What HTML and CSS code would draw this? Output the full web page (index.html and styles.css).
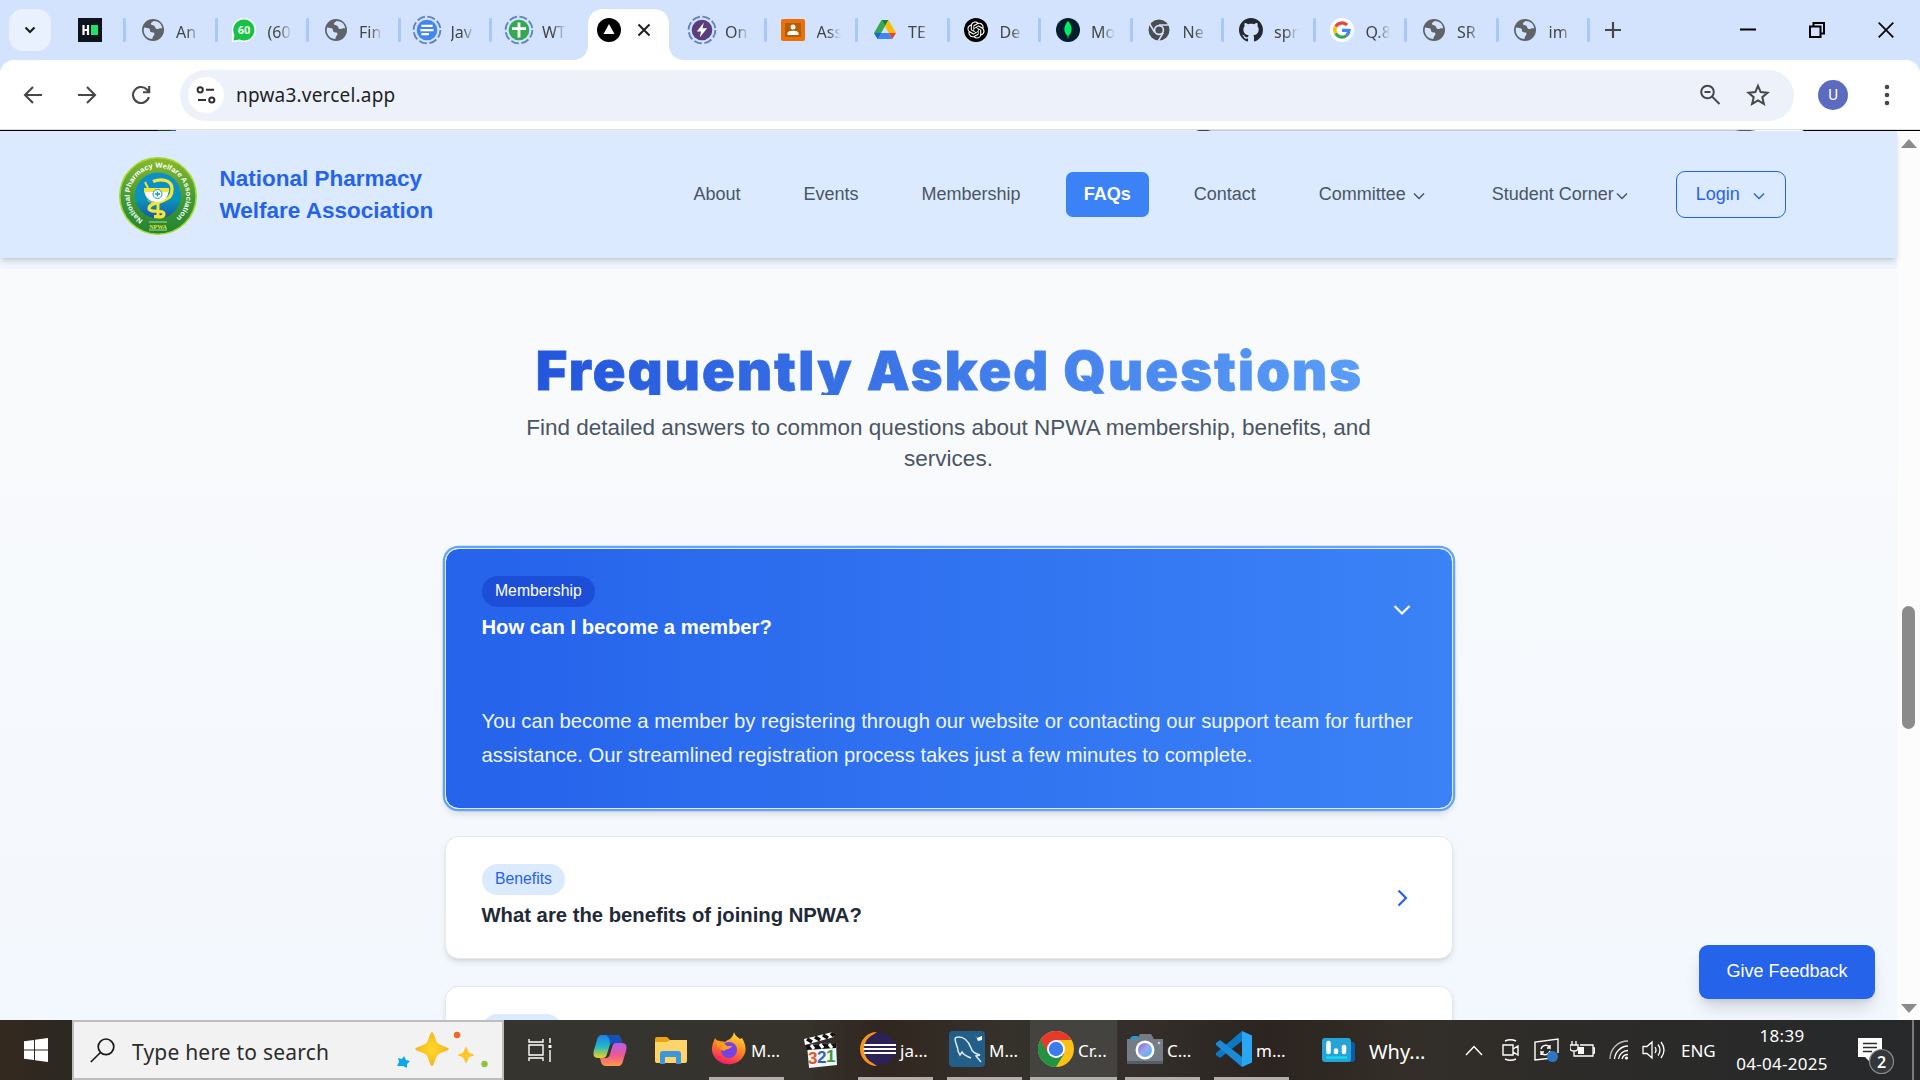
FILE: index.html
```html
<!DOCTYPE html>
<html lang="en">
<head>
<meta charset="utf-8">
<title>NPWA</title>
<link rel="stylesheet" href="styles.css">
</head>
<body>
<svg class="defs" width="0" height="0">
  <symbol id="globe" viewBox="0 0 24 24"><circle cx="12" cy="12" r="11" fill="#5f6368"/><path d="M3 9.5c2 .6 4.500 .2 5.500 1.200 1 1-.2 2.500 1.300 3.300s3.500-.2 3.600 1.800-1.700 1.800-2 5.200C6.500 21 3 17 2.700 12.500zM12.500 3c-1 1.200-2.800 1.500-2.600 3s2.600.8 3.600 2 .6 2.600 2.200 3 3-1 5.500-.6C20.800 6 17.500 3 12.500 3z" fill="#d3e3fd"/></symbol>
  <symbol id="ring" viewBox="0 0 32 32"><circle cx="16" cy="16" r="14.300" fill="none" stroke="#6184bd" stroke-width="2" stroke-dasharray="8.500 2.730"/></symbol>
  <symbol id="down" viewBox="0 0 12 8"><path d="M1 1.500l5 5 5-5" fill="none" stroke="currentColor" stroke-width="1.500"/></symbol>
</svg>

<div class="tabstrip">
  <div class="tab-search"><svg width="14" height="10" viewBox="0 0 14 10"><path d="M2.500 2.500L7 7l4.500-4.500" fill="none" stroke="#1f1f1f" stroke-width="2.200"/></svg></div>
  <div class="tab tab-pinned"><svg class="fav" viewBox="0 0 24 24"><path fill="#0e141e" d="M0 0h24v24H0z"/><path d="M5.500 7v10M10 7v10M5.500 12H10" stroke="#fff" stroke-width="2.200"/><path fill="#1ee06b" d="M13 7h7v10h-7z"/></svg></div>
  <div class="tab"><svg class="fav"><use href="#globe"/></svg><span>An</span></div>
  <div class="tab"><svg class="fav" viewBox="0 0 24 24"><path d="M12 0a12 12 0 1 1-4 23.300L0 24V12A12 12 0 0 1 12 0z" fill="#fff"/><path d="M12 1.500a10.500 10.500 0 1 1-4.500 20L1.500 22.500 2.500 17A10.500 10.500 0 0 1 12 1.500z" fill="#17c244"/><text x="12" y="16" font-size="11" font-weight="700" fill="#fff" text-anchor="middle" font-family="Roboto,sans-serif">60</text></svg><span>(60</span></div>
  <div class="tab"><svg class="fav"><use href="#globe"/></svg><span>Fin</span></div>
  <div class="tab"><svg class="fav big" viewBox="0 0 32 32"><use href="#ring"/><circle cx="16" cy="16" r="11" fill="#4285f4"/><path d="M10 11.500h12M9 16h14M10 20.500h8" stroke="#fff" stroke-width="2.400"/></svg><span>Jav</span></div>
  <div class="tab nosep"><svg class="fav big" viewBox="0 0 32 32"><use href="#ring"/><circle cx="16" cy="16" r="11" fill="#34a853"/><path d="M16 8v16M8.500 14.500h15" stroke="#fff" stroke-width="3"/></svg><span>WT</span></div>
  <div class="tab nosep active"><svg class="fav" viewBox="0 0 24 24"><circle cx="12" cy="12" r="12"/><path fill="#fff" d="M12 6l5.500 10h-11z"/></svg><svg class="close" width="14" height="14" viewBox="0 0 14 14"><path d="M1.500 1.500l11 11m0-11l-11 11" stroke="#1f1f1f" stroke-width="2"/></svg></div>
  <div class="tab"><svg class="fav big" viewBox="0 0 32 32"><use href="#ring"/><circle cx="16" cy="16" r="11" fill="#5a3d7c"/><path d="M18 8l-7.500 9.500h4.500L13.500 24l8-10h-5z" fill="#fff"/></svg><span>On</span></div>
  <div class="tab"><svg class="fav" viewBox="0 0 24 24"><rect y="1" width="24" height="22" rx="2" fill="#e8710a"/><path fill="#b85c00" d="M4 5h16v14H4z"/><circle cx="12" cy="9" r="2.500" fill="#fff"/><path d="M6.500 17v-2c0-3 11-3 11 0v2z" fill="#fff"/></svg><span>Ass</span></div>
  <div class="tab"><svg class="fav" viewBox="0 0 24 24"><path d="M8.500 2h7L12 8.300z" fill="#188038"/><path d="M8.500 2L12 8.300 4.700 21 1 15z" fill="#34a853"/><path d="M15.500 2L23 15h-7.200L12 8.300z" fill="#fbbc04"/><path d="M4.700 21L8.200 15h7.600l3.500 6z" fill="#4285f4"/><path d="M1 15h7.200l-3.500 6z" fill="#1967d2"/><path d="M23 15h-7.200l3.500 6z" fill="#ea4335"/></svg><span>TE</span></div>
  <div class="tab"><svg class="fav" viewBox="0 0 24 24"><circle cx="12" cy="12" r="12"/><path transform="translate(3.400 3.400) scale(.717)" fill="#fff" d="M22.2819 9.8211a5.9847 5.9847 0 0 0-.5157-4.9108 6.0462 6.0462 0 0 0-6.5098-2.9A6.0651 6.0651 0 0 0 4.9807 4.1818a5.9847 5.9847 0 0 0-3.9977 2.9 6.0462 6.0462 0 0 0 .7427 7.0966 5.98 5.98 0 0 0 .511 4.9107 6.051 6.051 0 0 0 6.5146 2.9001A5.9847 5.9847 0 0 0 13.2599 24a6.0557 6.0557 0 0 0 5.7718-4.2058 5.9894 5.9894 0 0 0 3.9977-2.9001 6.0557 6.0557 0 0 0-.7475-7.0729zm-9.022 12.6081a4.4755 4.4755 0 0 1-2.8764-1.0408l.1419-.0804 4.7783-2.7582a.7948.7948 0 0 0 .3927-.6813v-6.7369l2.02 1.1686a.071.071 0 0 1 .038.052v5.5826a4.504 4.504 0 0 1-4.4945 4.4944zm-9.6607-4.1254a4.4708 4.4708 0 0 1-.5346-3.0137l.142.0852 4.783 2.7582a.7712.7712 0 0 0 .7806 0l5.8428-3.3685v2.3324a.0804.0804 0 0 1-.0332.0615L9.74 19.9502a4.4992 4.4992 0 0 1-6.1408-1.6464zM2.3408 7.8956a4.485 4.485 0 0 1 2.3655-1.9728V11.6a.7664.7664 0 0 0 .3879.6765l5.8144 3.3543-2.0201 1.1685a.0757.0757 0 0 1-.071 0l-4.8303-2.7865A4.504 4.504 0 0 1 2.3408 7.872zm16.5963 3.8558L13.1038 8.364 15.1192 7.2a.0757.0757 0 0 1 .071 0l4.8303 2.7913a4.4944 4.4944 0 0 1-.6765 8.1042v-5.6772a.79.79 0 0 0-.407-.667zm2.0107-3.0231l-.142-.0852-4.7735-2.7818a.7759.7759 0 0 0-.7854 0L9.409 9.2297V6.8974a.0662.0662 0 0 1 .0284-.0615l4.8303-2.7866a4.4992 4.4992 0 0 1 6.6802 4.66zM8.3065 12.863l-2.02-1.1638a.0804.0804 0 0 1-.038-.0567V6.0742a4.4992 4.4992 0 0 1 7.3757-3.4537l-.142.0805L8.704 5.459a.7948.7948 0 0 0-.3927.6813zm1.0976-2.3654l2.602-1.4998 2.6069 1.4998v2.9994l-2.5974 1.4997-2.6067-1.4997Z"/></svg><span>De</span></div>
  <div class="tab"><svg class="fav" viewBox="0 0 24 24"><circle cx="12" cy="12" r="12" fill="#001e2b"/><path d="M12 3c5 5.500 4.500 11.500.4 15v2.500h-.8V18C7.500 14.500 7 8.500 12 3z" fill="#00ed64"/></svg><span>Mo</span></div>
  <div class="tab"><svg class="fav" viewBox="0 0 24 24"><circle cx="12" cy="12" r="10.500" fill="#4a4d51"/><circle cx="12" cy="12" r="5.200" fill="#d3e3fd"/><circle cx="12" cy="12" r="3.600" fill="#4a4d51"/><path d="M12 7h10M7.700 14.500L2.700 6M16.300 14.500l-5 8.500" stroke="#d3e3fd" stroke-width="1.500"/></svg><span>Ne</span></div>
  <div class="tab"><svg class="fav" viewBox="0 0 16 16"><path fill="#24292f" d="M8 0C3.580 0 0 3.580 0 8c0 3.540 2.290 6.530 5.470 7.590.4.070.55-.17.55-.38 0-.19-.01-.82-.01-1.490-2.010.37-2.530-.49-2.690-.94-.09-.23-.48-.94-.82-1.130-.28-.15-.68-.52-.01-.53.63-.01 1.080.58 1.230.82.72 1.210 1.870.87 2.330.66.070-.52.28-.87.510-1.070-1.780-.2-3.640-.89-3.640-3.950 0-.87.310-1.590.820-2.150-.08-.2-.36-1.020.08-2.120 0 0 .67-.21 2.200.82.640-.18 1.320-.27 2-.27s1.360.09 2 .27c1.530-1.040 2.200-.82 2.200-.82.440 1.100.160 1.920.080 2.120.510.560.820 1.270.820 2.150 0 3.070-1.870 3.750-3.650 3.950.290.250.540.730.540 1.480 0 1.070-.01 1.930-.01 2.200 0 .210.150.460.550.380A8 8 0 0 0 16 8c0-4.420-3.580-8-8-8z"/></svg><span>spr</span></div>
  <div class="tab"><svg class="fav" viewBox="0 0 24 24"><circle cx="12" cy="12" r="12" fill="#fff"/><g fill="none" stroke-width="3.300"><path d="M17 7A7.200 7.200 0 0 0 5.800 8.500" stroke="#ea4335"/><path d="M5.800 8.500a7.200 7.200 0 0 0 0 7" stroke="#fbbc04"/><path d="M5.800 15.500a7.200 7.200 0 0 0 10.800 2" stroke="#34a853"/><path d="M16.600 17.500A7.200 7.200 0 0 0 19 12.300h-7" stroke="#4285f4"/></g></svg><span>Q.8</span></div>
  <div class="tab"><svg class="fav"><use href="#globe"/></svg><span>SR</span></div>
  <div class="tab"><svg class="fav"><use href="#globe"/></svg><span>im</span></div>
  <svg class="plus" width="16" height="16" viewBox="0 0 16 16"><path d="M8 0v16M0 8h16" stroke="#474747" stroke-width="2.200"/></svg>
  <div class="winctl">
    <svg width="16" height="16" viewBox="0 0 16 16"><path d="M0 7.500h16" stroke="#000" stroke-width="2"/></svg>
    <svg width="16" height="16" viewBox="0 0 16 16"><path d="M1 4.500h10.500V15H1zM4.500 4.500V1H15v10.500h-3.500" fill="none" stroke="#000" stroke-width="2"/></svg>
    <svg width="16" height="16" viewBox="0 0 16 16"><path d="M.7.7l14.600 14.600m0-14.600L.7 15.300" stroke="#000" stroke-width="1.700"/></svg>
  </div>
</div>

<div class="toolbar">
  <svg class="nav-ic" viewBox="0 0 20 20"><path d="M19 10H2.500M10 2L2 10l8 8" fill="none" stroke="#474747" stroke-width="2.100"/></svg>
  <svg class="nav-ic" viewBox="0 0 20 20"><path d="M1 10h16.500M10 2l8 8-8 8" fill="none" stroke="#474747" stroke-width="2.100"/></svg>
  <svg class="nav-ic" viewBox="0 0 20 20"><path d="M17.800 12a8 8 0 1 1-1.900-7.500L18 6.700M18.200 1v6.300H12" fill="none" stroke="#474747" stroke-width="2.100"/></svg>
  <div class="omnibox">
    <div class="chip"><svg width="20" height="18" viewBox="0 0 20 18"><g fill="none" stroke="#303030" stroke-width="2"><circle cx="4.200" cy="3.800" r="2.600"/><path d="M10 3.800h8M2 14h8"/><circle cx="15.800" cy="14" r="2.600"/></g></svg></div>
    <span class="url">npwa3.vercel.app</span>
    <svg class="zoom" width="22" height="22" viewBox="0 0 22 22"><g fill="none" stroke="#474747" stroke-width="2"><circle cx="8.500" cy="8" r="6.300"/><path d="M13 12.500l7.500 7.500M5.500 8h6"/></g></svg>
    <svg width="24" height="24" viewBox="0 0 24 24"><path d="M12 2.800l2.700 6.300 6.800.6-5.200 4.500 1.600 6.700L12 17.300l-5.900 3.600 1.600-6.700-5.200-4.500 6.800-.6z" fill="none" stroke="#474747" stroke-width="2"/></svg>
  </div>
  <div class="avatar">U</div>
  <svg class="dots" width="6" height="22" viewBox="0 0 6 22"><g fill="#474747"><circle cx="3" cy="3" r="2.300"/><circle cx="3" cy="11" r="2.300"/><circle cx="3" cy="19" r="2.300"/></g></svg>
</div>
<div class="edge"></div>

<div class="viewport">
  <div class="page">
    <header class="site-header">
      <svg class="logo" viewBox="0 0 78 78">
        <defs>
          <linearGradient id="lg" x2="0" y2="1"><stop stop-color="#8cb82b"/><stop offset=".55" stop-color="#3d9a36"/><stop offset="1" stop-color="#23832f"/></linearGradient>
          <linearGradient id="lb" x2="0" y2="1"><stop stop-color="#0c8fd0"/><stop offset=".6" stop-color="#0a93b8"/><stop offset="1" stop-color="#1a57a8"/></linearGradient>
          <path id="arc" d="M24 63A28.300 28.300 0 1 1 54 63"/>
        </defs>
        <circle cx="39" cy="39" r="38.200" fill="url(#lg)" stroke="#a4d82c" stroke-width="1.600"/>
        <circle cx="39" cy="38.500" r="23" fill="url(#lb)"/>
        <text font-family="Liberation Sans,sans-serif" font-size="7.200" font-weight="700" fill="#fff"><textPath href="#arc" textLength="142" lengthAdjust="spacingAndGlyphs">National Pharmacy Welfare Association</textPath></text>
        <g fill="none" stroke="#f4e53a" stroke-width="3.200"><path d="M34 24.500c8-3.500 19-1.500 19 7.500s-5 10-10 12-13 3-13 7.500 15 1 15 5.500-8 2.500-10 2.500"/><path d="M39 44v16" stroke-width="3"/></g>
        <path d="M25 31h25c0 10-6 14-12.500 14S25 41 25 31z" fill="#fff"/><path d="M25 31h25v4H25z" fill="#f4e53a"/><path d="M27 41c3 6 18 6 21 0l-2 3q-8 6-17 0z" fill="#f4e53a"/><path d="M29 31l-3-6" stroke="#f4e53a" stroke-width="2"/>
        <circle cx="38.500" cy="37" r="4.500" fill="#fff" stroke="#1694b5"/><path d="M38.500 34.500v5M36 37h5" stroke="#1694b5" stroke-width="1.300"/>
        <path d="M30 65h18M30 73h18" stroke="#b9d9a0" stroke-width="1"/><text x="39" y="71.500" font-family="Liberation Serif,serif" font-size="6" font-weight="700" fill="#e8e43a" text-anchor="middle">NPWA</text>
      </svg>
      <div class="brand">National Pharmacy<br>Welfare Association</div>
      <nav class="menu">
        <a>About</a><a>Events</a><a>Membership</a><a class="current">FAQs</a><a>Contact</a>
        <a class="drop">Committee<svg class="chev"><use href="#down"/></svg></a>
        <a class="drop tight">Student Corner<svg class="chev"><use href="#down"/></svg></a>
      </nav>
      <div class="login">Login<svg class="chev"><use href="#down"/></svg></div>
    </header>
    <div class="strip"></div>
    <main class="faq">
      <h1>Frequently Asked Questions</h1>
      <p class="lead">Find detailed answers to common questions about NPWA membership, benefits, and services.</p>
      <section class="card open">
        <div class="card-head">
          <div><span class="badge">Membership</span><h3>How can I become a member?</h3></div>
          <svg class="toggle" viewBox="0 0 22 22"><path d="M3.500 7l7.500 7.500L18.500 7" fill="none" stroke="currentColor" stroke-width="2.200"/></svg>
        </div>
        <p class="answer">You can become a member by registering through our website or contacting our support team for further assistance. Our streamlined registration process takes just a few minutes to complete.</p>
      </section>
      <section class="card">
        <div class="card-head">
          <div><span class="badge">Benefits</span><h3>What are the benefits of joining NPWA?</h3></div>
          <svg class="toggle" viewBox="0 0 22 22"><path d="M7.500 3.500L15 11l-7.500 7.500" fill="none" stroke="currentColor" stroke-width="2.200"/></svg>
        </div>
      </section>
      <section class="card">
        <div class="card-head"><div><span class="badge empty"></span></div></div>
      </section>
    </main>
    <button class="feedback">Give Feedback</button>
  </div>
  <div class="scrollbar">
    <svg width="16" height="9" viewBox="0 0 16 9"><path d="M8 0l8 9H0z" fill="#8b8b8b"/></svg>
    <div class="thumb"></div>
    <svg width="16" height="9" viewBox="0 0 16 9"><path d="M8 9l8-9H0z" fill="#8b8b8b"/></svg>
  </div>
</div>

<div class="taskbar">
  <div class="start"><svg width="24" height="24" viewBox="0 0 24 24"><path fill="#fff" d="M0 3.300l10-1.400v9.500H0zM11 1.700L24 0v11.400H11zM0 12.500h10V22L0 20.700zM11 12.500h13V24l-13-1.800z"/></svg></div>
  <div class="search">
    <svg width="25" height="25" viewBox="0 0 25 25"><g fill="none" stroke="#1a1a1a" stroke-width="1.700"><circle cx="16" cy="8.800" r="7.800"/><path d="M10.500 14.500L.8 24"/></g></svg>
    <span>Type here to search</span>
    <svg class="spark" width="94" height="48" viewBox="0 0 94 48"><defs><radialGradient id="gs"><stop stop-color="#ffd92e"/><stop offset="1" stop-color="#f5b61b"/></radialGradient></defs><path d="M37 6c2 0 3.500 9 5.500 11S54 21.500 54 23s-9.500 3.500-11.500 6S39 40 37 40s-3.500-8.500-5.500-11S20 24.500 20 23s9.500-4 11.500-6S35 6 37 6z" fill="url(#gs)"/><path d="M71 21c1 0 2 4.500 3 5.500s5 1.500 5 2.500-4 1.500-5 2.500-2 5.500-3 5.500-2-4.500-3-5.500-5-1.500-5-2.500 4-1.500 5-2.500 2-5.500 3-5.500z" fill="#fcc62c"/><path d="M9 30l2 4 4 1-3 3 0 4-4-2-6 0 2-4-1-4 4 1z" fill="#0aa9ea"/><circle cx="62" cy="9" r="3.200" fill="#f26522"/><circle cx="89.500" cy="38" r="3.200" fill="#8cc63f"/></svg>
  </div>
  <svg class="taskview" width="24" height="24" viewBox="0 0 24 24"><g fill="none" stroke="#fff" stroke-width="1.400"><path d="M1 1v3h14V1M1 7h14v10H1zM1 23v-3h14v3M22 0v5M22 12v12"/></g><path fill="#fff" d="M20.500 7h3v3h-3z"/></svg>
  <svg class="copilot" width="34" height="32" viewBox="0 0 34 32"><defs><linearGradient id="c1" x2="0" y2="1"><stop stop-color="#1b7ff0"/><stop offset=".5" stop-color="#22b8c8"/><stop offset="1" stop-color="#f0d21a"/></linearGradient><linearGradient id="c2" x2="0" y2="1"><stop stop-color="#b45cf0"/><stop offset=".55" stop-color="#ee5a8e"/><stop offset="1" stop-color="#ff9a4a"/></linearGradient></defs><path d="M9 1h14c4 0 5 3 6 8h-9c-2 0-3 1-3.500 3L14 20c-1 3-2 4-5 4H5c-5 0-5-4-4-8l3-10C5 2.500 6 1 9 1z" fill="url(#c1)"/><path d="M23 1c4 0 5 3 6 8h-9c-2 0-2.500 1-3 2 0-5-1-8-4-10z" fill="#1450b8"/><path d="M25 32H13c-4 0-5-3-6-8h5c3 0 4-1 5-4l2.500-8c.5-2 1.500-3 3.500-3h6c5 0 5 4 4 8l-3 10c-1 3.500-2 5-5 5z" fill="url(#c2)"/></svg>
  <svg class="explorer" width="32" height="27" viewBox="0 0 32 27"><path d="M0 2q0-2 2-2h10l3 3v5H0z" fill="#e8a317"/><path d="M0 5h12l3-2h17v21q0 2-2 2H2q-2 0-2-2z" fill="#fdd468"/><path d="M5 26V17q0-3 3-3h15q3 0 3 3v10h-5v-7H10v7H5z" fill="#3a97e0"/></svg>
  <div class="app firefox"><svg width="36" height="36" viewBox="0 0 36 36"><defs><linearGradient id="ff" x1=".7" x2=".3" y2="1"><stop stop-color="#ffe23e"/><stop offset=".45" stop-color="#ff8a1f"/><stop offset="1" stop-color="#f5156c"/></linearGradient></defs><path d="M23 1c1 4 4 5 6 7l2-1c3 5 4 9 3.500 13A17 16 0 0 1 1 20C.5 14 3 10 4 7l3 4c2-1 5-1 7 0 2-2 8-3 9-10z" fill="url(#ff)"/><circle cx="18" cy="19" r="8" fill="#7542e5"/><path d="M5 9c5 1 8 3 11 6h5c-1 3-6 3-8 5-2-1-8-3-8-11z" fill="#ff9a1a"/></svg><span>M...</span></div>
  <svg class="mpc" width="34" height="36" viewBox="0 0 34 36"><path d="M3 13l29-2 1 22-28 3z" fill="#f6f6f6"/><path d="M0 7L29 0l1 5L1 13z" fill="#fff"/><path d="M2 13l30-2v5L3 18z" fill="#111"/><path d="M3 7l5 3M11 5l5 3M19 3l5 3M27 1l3 3" stroke="#111" stroke-width="3.500"/><path d="M7 13l3 4M16 12l3 4M25 12l3 4" stroke="#fff" stroke-width="3"/><g font-family="Liberation Sans,sans-serif" font-weight="700" font-size="17"><text x="4" y="32" fill="#d9582b">3</text><text x="13" y="31" fill="#2c64b8">2</text><text x="22" y="30" fill="#379c3b">1</text></g></svg>
  <div class="app eclipse"><svg width="36" height="36" viewBox="0 0 36 36"><path d="M17 1A17 17 0 0 0 17 35 20 20 0 0 1 17 1z" fill="#f7941e"/><circle cx="20" cy="18" r="16" fill="#2c2255"/><path d="M4 14h32M3.500 18h33M4 22h32" stroke="#fff" stroke-width="2"/></svg><span>ja...</span></div>
  <div class="app mysql"><svg width="36" height="36" viewBox="0 0 36 36"><rect width="36" height="36" rx="4" fill="#225e88"/><path d="M6 7c8-4 14 4 16 10 1 4 5 6 9 7l-4 1 5 6M6 7c0 6 3 8 3 13l2 4 2-3c2 4 5 4 9 6" fill="none" stroke="#dbe9f2" stroke-width="1.500"/><path d="M26 3l2 4 5-2v4l-4 1z" fill="#fff"/></svg><span>M...</span></div>
  <div class="app chrome"><svg width="36" height="36" viewBox="0 0 36 36"><circle cx="18" cy="18" r="18" fill="#fbc116"/><path d="M18 18L2.400 9A18 18 0 0 0 18 36l8-13z" fill="#229342"/><path d="M18 9h15.600A18 18 0 0 0 2.400 9L10.200 22.500 18 18z" fill="#e33b2e"/><circle cx="18" cy="18" r="9" fill="#fff"/><circle cx="18" cy="18" r="7.200" fill="#3a7cec"/></svg><span>Cr...</span></div>
  <div class="app camera"><svg width="36" height="30" viewBox="0 0 36 30"><defs><linearGradient id="cm" x2="1" y2="1"><stop stop-color="#7e6ad8"/><stop offset=".5" stop-color="#9ca6ee"/><stop offset="1" stop-color="#35c0ee"/></linearGradient></defs><path d="M3 6q0-4 4-4h4v4z" fill="#1c9be0"/><path d="M0 5h10l3-5h11l3 5h9v25H0z" fill="#747c86"/><path d="M0 27h36v3H0z" fill="#555d66"/><circle cx="18" cy="16" r="9.500" fill="#fff"/><circle cx="18" cy="16" r="7" fill="url(#cm)"/><circle cx="32" cy="9" r="1.300" fill="#ccc"/></svg><span>C...</span></div>
  <div class="app vscode"><svg width="36" height="36" viewBox="0 0 36 36"><path d="M26 0l10 4.500v27L26 36z" fill="#2aa7f2"/><path d="M26 0v10L4 27 0 24v-2z" fill="#0b78c4"/><path d="M26 36V26L4 9 0 12v2z" fill="#1a8ad6"/></svg><span>m...</span></div>
  <svg class="news" width="34" height="24" viewBox="0 0 34 24"><path d="M20 4h10q3 0 3 3v14q0 3-3 3H20z" fill="#0b5cad"/><rect width="29" height="24" rx="3" fill="#27a4d6"/><path d="M6.500 5v9M14 12.500v1.500M22 9v5" stroke="#fff" stroke-width="4.500" stroke-linecap="round"/><path d="M4 19.500h21" stroke="#13dcf0" stroke-width="2.400"/></svg>
  <span class="why">Why...</span>
  <div class="tray">
    <svg width="18" height="11" viewBox="0 0 18 11"><path d="M1 10l8-8.500 8 8.500" fill="none" stroke="#fff" stroke-width="1.500"/></svg>
    <svg width="17" height="22" viewBox="0 0 17 22"><path d="M3 2q5.500-2.500 11 0M3 20q5.500 2.500 11 0M1 6h10v10H1zM11 10l5-3v9l-5-3" fill="none" stroke="#fff" stroke-width="1.400"/></svg>
    <svg width="25" height="25" viewBox="0 0 25 25"><path d="M14 20.500L1 22V4l23-3v14" fill="none" stroke="#fff" stroke-width="1.400"/><path d="M7 11a5 5 0 0 1 9-1.500V7M16 10h-3M16 13a5 5 0 0 1-9 1.500V17M7 14h3" fill="none" stroke="#fff" stroke-width="1.400"/><circle cx="18.500" cy="18.500" r="5.500" fill="#2f75c2"/></svg>
    <svg width="25" height="19" viewBox="0 0 25 19"><path d="M8 15h15V4H10M23 7h1.500v5H23M2 0v4M6 0v4M0 4h8v3q0 3-4 3t-4-3zM4 10v5h4" fill="none" stroke="#fff" stroke-width="1.300"/><path d="M8 6h6v7H8z" fill="#fff"/></svg>
    <svg width="20" height="20" viewBox="0 0 20 20"><g fill="none" stroke="#fff" stroke-width="1.300"><path d="M1 19A18 18 0 0 1 19 1" opacity=".7"/><path d="M5.500 19A14 14 0 0 1 19 6M9.500 19A9.500 9.500 0 0 1 19 10.500M13 19A6 6 0 0 1 19 14.500"/></g><circle cx="17.500" cy="18" r="1.600" fill="#fff"/></svg>
    <svg width="23" height="20" viewBox="0 0 23 20"><path d="M1 6.500h4L10 2v16l-5-4.500H1zM13 7q2 3 0 6M16 4.500q4 5.500 0 11M19 2q6 8 0 16" fill="none" stroke="#fff" stroke-width="1.300"/></svg>
    <span class="lang">ENG</span>
    <div class="clock"><span>18:39</span><span>04-04-2025</span></div>
    <svg width="38" height="38" viewBox="0 0 38 38"><path d="M0 0h24v19H12v5l-5-5H0z" fill="#fff"/><path d="M5 5.500h14M5 9.500h14M5 13.500h9" stroke="#2b2b2b" stroke-width="1.400"/><circle cx="23.500" cy="23.500" r="12" fill="#35373a" stroke="#8d8d8d" stroke-width="1.200"/><text x="23.500" y="29.500" font-family="Noto Sans,sans-serif" font-size="16" font-weight="600" fill="#fff" text-anchor="middle">2</text></svg>
  </div>
  <div class="peek"></div>
</div>
</body>
</html>
```
FILE: styles.css
```css
* { box-sizing: border-box; }
body {
  margin: 0; width: 1920px; height: 1080px; overflow: hidden;
  display: flex; flex-direction: column; background: #d3e3fd;
  font-family: "Liberation Sans", Arial, sans-serif;
}
svg { display: block; flex: none; }
.defs { position: absolute; }

/* browser tabs */
.tabstrip { height: 60px; flex: none; display: flex; align-items: center; padding-left: 9px; font: 16px "Noto Sans", sans-serif; color: #444; }
.tab-search { width: 42px; height: 42px; border-radius: 14px; background: #e9f1fe; display: flex; align-items: center; justify-content: center; }
.tab { position: relative; width: 91.5px; height: 60px; flex: none; display: flex; align-items: center; padding-left: 14.500px; }
.tab::after { content: ""; position: absolute; right: 0; top: 18px; width: 3px; height: 24px; background: #a8c7fa; border-radius: 1px; }
.tab.nosep::after { display: none; }
.tab-pinned { width: 75px; padding-left: 27px; }
.fav { width: 24px; height: 24px; }
.fav.big { width: 30px; height: 30px; margin: 0 -3px; }
.tab span { width: 24px; margin: 3px 0 0 11.500px; overflow: hidden; white-space: nowrap; line-height: 24px; mask-image: linear-gradient(90deg, #000 45%, transparent); }
.tab.active { z-index: 1; left: -1px; }
.tab.active::before {
  content: ""; position: absolute; z-index: -1; left: -9px; top: 9px; width: 109px; height: 51px;
  background:
    radial-gradient(circle at 0 0, transparent 13.500px, #fff 14px) 0 100% / 14px 14px no-repeat,
    radial-gradient(circle at 100% 0, transparent 13.500px, #fff 14px) 100% 100% / 14px 14px no-repeat,
    linear-gradient(#fff, #fff) 14px 100% / 81px 37px no-repeat,
    linear-gradient(#fff, #fff) 28px 0 / 53px 14px no-repeat,
    radial-gradient(circle at 100% 100%, #fff 13.500px, transparent 14px) 14px 0 / 14px 14px no-repeat,
    radial-gradient(circle at 0 100%, #fff 13.500px, transparent 14px) 81px 0 / 14px 14px no-repeat;
}
.close { margin-left: 16px; }
.plus { margin-left: 15px; }
.winctl { margin-left: auto; margin-right: 26.500px; display: flex; gap: 53px; }

/* address bar */
.toolbar { height: 69px; flex: none; display: flex; align-items: center; padding: 1px 0 0 23px; background: #fff; border-radius: 14px 14px 0 0; }
.nav-ic { width: 20px; height: 20px; margin-right: 34px; }
.omnibox { width: 1614px; height: 51px; margin-left: -5px; border-radius: 26px; background: #edf1fa; display: flex; align-items: center; padding: 0 24px 0 8px; }
.chip { width: 36px; height: 36px; border-radius: 50%; background: #fff; display: flex; align-items: center; justify-content: center; }
.url { margin-left: 12px; font: 19px/26px "Noto Sans", sans-serif; color: #1f1f1f; letter-spacing: .2px; }
.zoom { margin-left: auto; margin-right: 25px; }
.avatar { width: 30px; height: 30px; margin-left: 24px; border-radius: 50%; background: #5c6bc0; color: #fff; font: 15px/30px Roboto, sans-serif; text-align: center; }
.dots { margin-left: 36px; }
.edge { height: 2px; flex: none; background: linear-gradient(90deg, #000 157px, #333 159px 170px, #1b64d8 172px 176px, #eceef0 176px 1196px, #444 1199px 1208px, #ccc 1211px 1735px, #555 1740px 1750px, #fff 1756px 1802px, #000 1804px) 0 100% / 100% 1px no-repeat, #dfdfdf; }

.viewport { height: 889px; flex: none; display: flex; overflow: hidden; }
.page { position: relative; width: 1897px; background: linear-gradient(#f9fafb 138px, #f3f8fe); }

/* site header */
.site-header { position: relative; z-index: 1; height: 127px; background: #dbeafe; display: flex; align-items: center; padding-left: 119px; box-shadow: 0 4px 7px -1px rgba(0,0,0,.14), 0 2px 4px -2px rgba(0,0,0,.12); }
.logo { width: 78px; height: 78px; margin-top: 3px; }
.brand { margin-left: 22.500px; font-weight: 700; font-size: 22.500px; line-height: 32px; color: #2563eb; width: 456px; white-space: nowrap; }
.menu { display: flex; gap: 27px; font-size: 18px; color: #4b5563; }
.menu a { display: flex; align-items: center; height: 45px; padding: 0 18px; white-space: nowrap; }
.menu .current { background: #3b82f6; color: #fff; font-weight: 700; border-radius: 6.750px; }
.chev { width: 12px; height: 8px; margin: 2px 4px 0 7px; }
.menu .tight .chev { margin: 2px 0 0 2px; }
.login { display: flex; align-items: center; margin-left: 30.500px; width: 110px; height: 47px; padding-left: 18.500px; border: 1.500px solid #2563eb; border-radius: 9px; color: #2563eb; font-size: 18px; }
.login .chev { margin-left: 13px; }
.strip { height: 11px; background: #eff6ff; }

/* questions */
.faq { display: flex; flex-direction: column; align-items: center; padding-top: 72px; }
h1 {
  margin: 0; width: 1008px; height: 54px; padding-top: 3px; text-align: center; white-space: nowrap;
  font: 900 54px/53px Inter, sans-serif; letter-spacing: 2.200px; text-indent: 2px;
  -webkit-text-stroke: .8px transparent;
  background: linear-gradient(90deg, #1d4ed8, #60a5fa); -webkit-background-clip: text; background-clip: text; color: transparent;
}
.lead { margin: 17px 0 73.500px; width: 864px; text-align: center; font-size: 22.500px; line-height: 31.200px; color: #4b5563; }
.card { width: 1008px; margin-bottom: 27px; background: #fff; border: 1px solid #e5e7eb; border-radius: 13.500px; box-shadow: 0 4px 7px -1px rgba(0,0,0,.1), 0 2px 4px -2px rgba(0,0,0,.1); color: #2563eb; }
.card-head { display: flex; align-items: center; justify-content: space-between; padding: 27px 39px 26.500px 36px; }
.badge { display: block; width: fit-content; height: 31px; padding: 0 13.500px; border-radius: 16px; background: #dbeafe; font-size: 15.750px; line-height: 30px; }
.badge.empty { width: 80px; }
h3 { margin: 5px 0 0; font-size: 20.250px; line-height: 31.500px; color: #1f2937; }
.toggle { width: 22px; height: 22px; }
.open { color: #fff; background: linear-gradient(90deg, #2563eb, #3b82f6) padding-box; box-shadow: 0 0 0 2.250px #60a5fa, 0 5px 7px rgba(0,0,0,.12); }
.open .badge { background: #1d4ed8; }
.open h3 { color: #fff; }
.answer { margin: 0; padding: 35.500px 36px 36px; font-size: 20.250px; line-height: 33.200px; color: #eff6ff; }
.feedback { position: absolute; left: 1699px; top: 814px; width: 176px; height: 54px; border: 0; border-radius: 9px; background: #2563eb; color: #fff; font: 18px "Liberation Sans", sans-serif; padding: 0 0 2px; box-shadow: 0 11px 17px -3px rgba(0,0,0,.15), 0 4px 7px -4px rgba(0,0,0,.15); }
.scrollbar { width: 23px; background: #fcfcfc; display: flex; flex-direction: column; align-items: center; padding: 8px 0 7px; }
.thumb { width: 13px; height: 123px; margin: 458px 0 auto; border-radius: 7px; background: #8b8b8b; }

/* desktop taskbar */
.taskbar { position: relative; height: 60px; flex: none; display: flex; align-items: center; color: #fff; font: 17px "Noto Sans", sans-serif; background: linear-gradient(90deg, #35291f 0, #2b2822 70px, #35342e 520px, #36332d 800px, #30261f 880px, #35312b 1000px, #332e29 1150px, #2b2420 1270px, #332e28 1400px, #2c2b29 1600px, #26282a 1920px); }
.start { width: 72px; display: flex; justify-content: center; }
.search { width: 432px; height: 60px; border: 2px solid #bdbdbd; background: #f2f2f2; display: flex; align-items: center; padding-left: 16px; color: #2b2b2b; font-size: 21px; }
.search span { margin: 3px 0 0 17px; letter-spacing: .2px; width: 201px; white-space: nowrap; }
.spark { margin-left: 62px; }
.taskview { margin-left: 24px; }
.copilot { margin-left: 41px; }
.explorer { margin-left: 28px; }
.app { height: 60px; width: 75px; flex: none; display: flex; align-items: center; padding-left: 2px; border-bottom: 3px solid #b3aeaa; overflow: hidden; }
.app span { margin: 3px 0 0 4px; white-space: nowrap; }
.firefox { margin-left: 22px; }
.mpc { margin-left: 20px; }
.eclipse { margin-left: 20px; }
.mysql { margin-left: 14px; }
.chrome { margin-left: 8px; width: 87px; padding-left: 8px; background: #454340; }
.camera { margin-left: 8px; }
.vscode { margin-left: 14px; }
.news { margin-left: 33px; }
.why { margin: 2px 0 0 13px; width: 96px; font-size: 20px; }
.tray { display: flex; align-items: center; }
.tray > svg:nth-child(2) { margin-left: 19px; }
.tray > svg:nth-child(3) { margin-left: 15px; }
.tray > svg:nth-child(4) { margin-left: 11px; }
.tray > svg:nth-child(5) { margin-left: 14px; }
.tray > svg:nth-child(6) { margin-left: 13px; }
.lang { margin: 0 0 0 16px; width: 34px; }
.clock { width: 94px; margin-left: 20px; display: flex; flex-direction: column; align-items: center; line-height: 28px; letter-spacing: .3px; white-space: nowrap; }
.tray > svg:last-child { margin: 14px 0 0 29px; }
.peek { margin-left: 16px; width: 2px; height: 60px; background: #77797b; }
```
